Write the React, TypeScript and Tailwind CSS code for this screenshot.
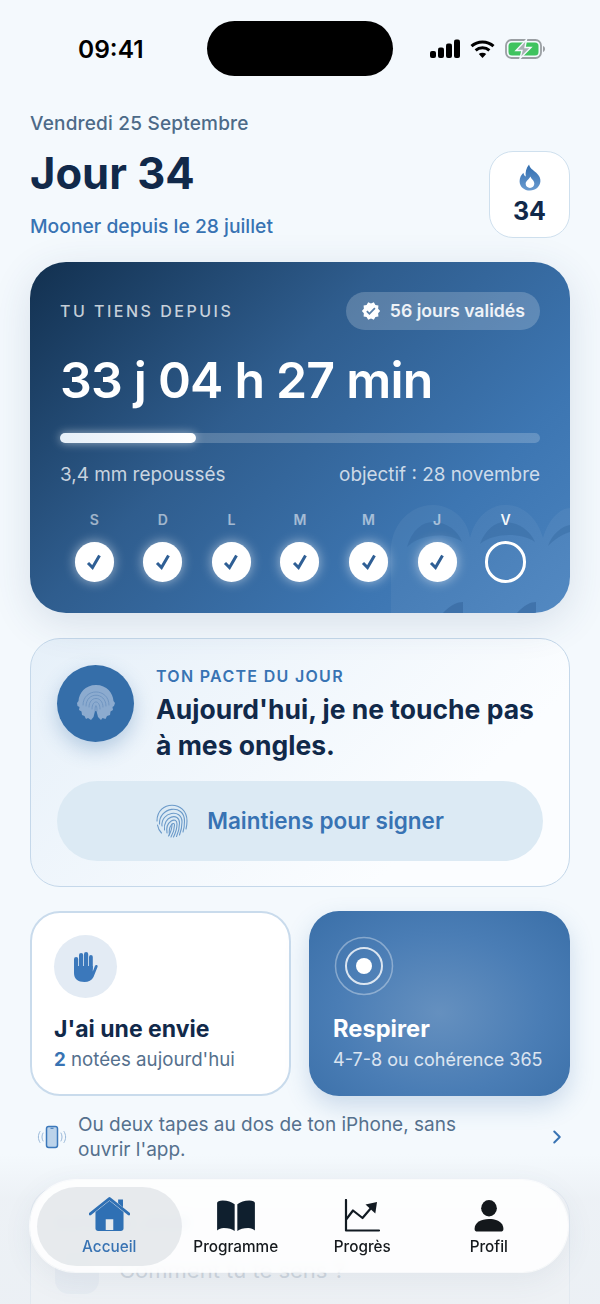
import { ChevronRight } from "lucide-react";
import { MdVerified } from "react-icons/md";

const WEEK = [
  { label: "S", done: true },
  { label: "D", done: true },
  { label: "L", done: true },
  { label: "M", done: true },
  { label: "M", done: true },
  { label: "J", done: true },
  { label: "V", done: false },
];

function StatusBar() {
  return (
    <div className="flex items-start pt-[21px] pl-[78px]">
      <span className="mt-[13px] w-[66px] text-[24.500px] leading-[30px] font-semibold text-black">09:41</span>
      <div className="ml-[63px] h-[55px] w-[186px] rounded-full bg-black" />
      <div className="ml-[37px] mt-[18px] flex items-center gap-[10px]">
        <svg width="30" height="20" viewBox="0 0 30 20" fill="#000">
          <rect x="0" y="12" width="6" height="7" rx="2" />
          <rect x="8" y="8.5" width="6" height="10.5" rx="2" />
          <rect x="16" y="4.5" width="6" height="14.5" rx="2" />
          <rect x="24" y="0.5" width="6" height="18.5" rx="2" />
        </svg>
        <svg width="25" height="20" viewBox="0 0 25 20" fill="none" stroke="#000" strokeWidth="3">
          <path d="M1.500 7.200C7.600 1.600 17.400 1.600 23.500 7.200" />
          <path d="M5.600 11.400C9.500 8 15.500 8 19.400 11.400" />
          <path d="M12.500 19L8.800 15C10.800 13.400 14.200 13.400 16.200 15Z" fill="#000" stroke="none" />
        </svg>
        <svg width="41" height="20" viewBox="0 0 41 20" fill="none">
          <rect x="1" y="1" width="35" height="18" rx="5.500" stroke="#9a9fa3" strokeWidth="1.800" />
          <rect x="3.500" y="3.500" width="30" height="13" rx="3.500" fill="#3fc35f" />
          <path d="M38 7v6c1.400-.4 2-1.600 2-3s-.6-2.600-2-3z" fill="#9a9fa3" />
          <path d="M21.500 0.500L11 11.500H17L15 19.500L26 8.500H20Z" fill="#a9b0b4" stroke="#f4f9fd" strokeWidth="1.400" />
        </svg>
      </div>
    </div>
  );
}

function Flame() {
  return (
    <svg width="24" height="27" viewBox="0 0 24 28">
      <defs>
        <linearGradient id="flameFill" x1="0" y1="0" x2="0" y2="1">
          <stop offset="0" stopColor="#2f6cae" />
          <stop offset="1" stopColor="#6a9bd0" />
        </linearGradient>
      </defs>
      <path
        d="M11 0.500C11.800 4.500 15 6 18.500 9C21.800 12 23 15 22.800 18C22.400 23.800 17.800 27.500 12 27.500C6 27.500 1.200 23.600 1.200 17.800C1.200 14 3 11 5.200 9C5.400 11 6.200 12.200 7.600 13C7 8.500 8 4 11 0.500Z"
        fill="url(#flameFill)"
      />
      <path
        d="M12.500 13C13 15.500 16.500 17 16.500 20.300C16.500 23 14.500 24.800 12 24.800C9.500 24.800 7.500 23 7.500 20.500C7.500 17.800 10.800 16.200 12.500 13Z"
        fill="#fff"
      />
    </svg>
  );
}

function SolidFingerprint() {
  return (
    <svg width="40" height="40" viewBox="0 0 40 40">
      <path
        d="M20 1C31 1 37 9 37.500 17L39 19L38 22L36.500 23L37 26L34.500 27.500L34 31L31 32L29.500 35L26.500 34L25 36L22 33L20.500 27L19 27L17.500 33L15 36L12 34L10 35L8.500 32L6 31L5.500 27.500L3 26L3.500 23L1.500 22L1 19L2.500 17C3 9 9 1 20 1Z"
        fill="#8cabcf"
      />
      <g fill="none" stroke="#6d93bf" strokeWidth="0.900" strokeLinecap="round">
        <path d="M7 21C7 3.500 33 3.500 33 21" />
        <path d="M10 22C10 7.500 30 7.500 30 22" />
        <path d="M13 23C13 11.500 27 11.500 27 23" />
        <path d="M16 25C16 15.500 24 15.500 24 25" />
        <path d="M19 27C19 19.500 21 19.500 21 27" />
      </g>
    </svg>
  );
}

function OutlineFingerprint() {
  return (
    <svg width="32" height="34" viewBox="0 0 32 34" fill="none" stroke="#6b9ac9" strokeWidth="1.100" strokeLinecap="round">
      <path d="M1 17C1 -4 31 -4 31 17C31 20 30.500 23 30 25" />
      <path d="M3.500 20C2.500 3 28.500 -1 28.500 17C28.500 21 28 25 27 28" />
      <path d="M1.500 21C2 24 3.500 27 5.500 29" />
      <path d="M6 22C4.500 8 26 4 26 18C26 23 25 27 23.500 31" />
      <path d="M8.500 26C6.500 12 23.500 8 23.500 19C23.500 24 22.500 28 20.500 32.500" />
      <path d="M11 29C9 17 21 12 21 20C21 25 19.500 29 17.500 33" />
      <path d="M13.500 31C12 21 18.500 17 18.500 21C18.500 26 17 29.500 15 33" />
      <path d="M16 20C16 25 15 28 12.500 32" />
    </svg>
  );
}

function Hand() {
  return (
    <svg width="24" height="30" viewBox="0 0 24 30" fill="#3b78bb">
      <rect x="0" y="5" width="4.200" height="15" rx="2.100" />
      <rect x="5" y="1" width="4.200" height="17" rx="2.100" />
      <rect x="10" y="0" width="4.200" height="17" rx="2.100" />
      <rect x="15" y="3" width="3.800" height="15" rx="1.900" />
      <path d="M0 14H18.800V19.500L21 13.800C21.800 12.200 24.300 13 23.500 15L19.500 25C17.800 28.200 14.500 30 10.500 30C4 30 0 27 0 21Z" />
    </svg>
  );
}

function TapPhone() {
  return (
    <svg width="30" height="24" viewBox="0 0 30 24" fill="none">
      <rect x="9.500" y="1.500" width="11" height="21" rx="2.200" fill="#bcd3ea" stroke="#3b78bb" strokeWidth="1.500" />
      <path d="M13.500 3.300h3" stroke="#3b78bb" strokeWidth="1" />
      <g stroke="#9ab9da" strokeWidth="1" strokeLinecap="round">
        <path d="M6 8C4.600 10.500 4.600 13.500 6 16" />
        <path d="M3 6.500C0.800 10 0.800 14 3 17.500" />
        <path d="M24 8C25.400 10.500 25.400 13.500 24 16" />
        <path d="M27 6.500C29.200 10 29.200 14 27 17.500" />
      </g>
    </svg>
  );
}

function HomeIcon() {
  return (
    <svg width="41" height="36" viewBox="0 0 38 37" fill="#2f70b4" preserveAspectRatio="none">
      <path d="M6 16.500L19 5L32 16.500V33.500C32 35 31 36 29.500 36H8.500C7 36 6 35 6 33.500ZM15.500 24V35H22.500V24Z" fillRule="evenodd" />
      <path d="M1 18.500L19 2.500L37 18.500" fill="none" stroke="#2f70b4" strokeWidth="2.800" strokeLinecap="round" strokeLinejoin="round" />
      <path d="M27 3.500H31.500V11.500L27 7.500Z" />
    </svg>
  );
}

function BookIcon() {
  return (
    <svg width="40" height="32" viewBox="0 0 36 33" fill="#0f1f2e" preserveAspectRatio="none">
      <path d="M1 3C1 1.500 3 0.500 6 0.500C10.500 0.500 14 1.800 16.800 4.500V32C14.500 30.300 11.500 29 7 29C4.500 29 2.500 30 1 31.500Z" />
      <path d="M35 3C35 1.500 33 0.500 30 0.500C25.500 0.500 22 1.800 19.200 4.500V32C21.500 30.300 24.500 29 29 29C31.500 29 33.500 30 35 31.500Z" />
    </svg>
  );
}

function ChartIcon() {
  return (
    <svg width="37" height="33" viewBox="0 0 36 33" fill="none" stroke="#121a22" strokeWidth="2.200" strokeLinecap="round" strokeLinejoin="round">
      <path d="M1.500 1V31.500H34.500" />
      <path d="M2 20L8.500 11.500L18 19L27 8.500" />
      <path d="M21 5.500L32.500 3L30.800 14.500Z" fill="#121a22" stroke="none" />
    </svg>
  );
}

function ProfileIcon() {
  return (
    <svg width="30" height="32" viewBox="0 0 26 31" fill="#14181c" preserveAspectRatio="none">
      <ellipse cx="13" cy="8" rx="6.800" ry="8" />
      <path d="M0.500 28C0.500 22 6 18.500 13 18.500C20 18.500 25.500 22 25.500 28C25.500 29.800 24.500 30.500 23 30.500H3C1.500 30.500 0.500 29.800 0.500 28Z" />
    </svg>
  );
}

const NAV = [
  { label: "Accueil", icon: <HomeIcon />, active: true },
  { label: "Programme", icon: <BookIcon />, active: false },
  { label: "Progrès", icon: <ChartIcon />, active: false },
  { label: "Profil", icon: <ProfileIcon />, active: false },
];

function BottomNav() {
  return (
    <div className="absolute left-[30px] top-[1180px] grid h-[92px] w-[538px] grid-cols-[repeat(4,126.5px)] rounded-[46px] bg-white/85 pl-[16px] shadow-[0_0_0_1px_rgba(255,255,255,0.7),0_8px_30px_rgba(60,90,120,0.08)] backdrop-blur-[4px]">
      {NAV.map((item) => (
        <div key={item.label} className="relative flex flex-col items-center">
          {item.active && (
            <div className="absolute -left-[9px] -right-[9px] top-[7px] h-[79px] rounded-[40px] bg-[#dfe3e7]/75" />
          )}
          <div className="relative flex h-[52px] items-end justify-center">{item.icon}</div>
          <span
            className={`relative mt-[5px] text-[15.300px] leading-[20px] font-medium ${
              item.active ? "text-[#3873b3]" : "text-[#15191d]"
            }`}
          >
            {item.label}
          </span>
        </div>
      ))}
    </div>
  );
}

export default function App() {
  return (
    <div
      className="relative h-[1304px] w-[600px] overflow-hidden bg-[#f4f9fd]"
      style={{ fontFamily: "Inter, 'Noto Sans', sans-serif" }}
    >
      <StatusBar />

      <div className="px-[30px]">
        {/* Header */}
        <div className="mt-[36px] flex items-start justify-between">
          <div>
            <p className="text-[19px] leading-[24px] font-medium tracking-[0.200px] text-[#4d6a88]">Vendredi 25 Septembre</p>
            <h1 className="mt-[10px] text-[43.500px] leading-[54px] font-bold text-[#11294a]">Jour 34</h1>
            <p className="mt-[14px] text-[19.300px] leading-[24px] font-medium text-[#3873b3]">
              Mooner depuis le 28 juillet
            </p>
          </div>
          <div className="mt-[39px] flex h-[87px] w-[81px] flex-col items-center rounded-[24px] border-[1.500px] border-[#cfe0ee] bg-white pt-[12px]">
            <Flame />
            <span className="mt-[5px] text-[25px] leading-[30px] font-bold text-[#11294a]">34</span>
          </div>
        </div>

        {/* Hero */}
        <div className="relative mt-[24px] h-[351px] overflow-hidden rounded-[36px] bg-[linear-gradient(135deg,#12304f_0%,#2f5d8e_40%,#3d76b2_75%,#4a83bf_100%)] px-[30px] pt-[30px] shadow-[0_10px_40px_rgba(40,70,110,0.14)]">
          <svg className="absolute bottom-0 right-0" width="180" height="113" viewBox="0 0 180 113" fill="none">
            <path d="M1 113V50C1 25 20 5 43 5C62 5 78 20 80 38C84 20 98 5 115 5C135 5 148 20 153 38C158 20 170 8 180 8V113Z" fill="#ffffff" fillOpacity="0.05" />
            <path d="M17 47C22 30 32 22 43 22C56 22 68 30 72 42C62 33 32 32 17 47Z" fill="#2f6098" fillOpacity="0.35" />
            <path d="M90 44C95 30 105 22 115 22C128 22 140 30 145 42C132 33 105 32 90 44Z" fill="#2f6098" fillOpacity="0.35" />
            <path d="M158 46C162 34 172 26 180 25V32C172 34 164 40 158 46Z" fill="#2f6098" fillOpacity="0.35" />
            <path d="M53 113C60 105 68 102 73 102V113Z" fill="#2f6098" fillOpacity="0.5" />
            <path d="M127 113C134 105 141 102 146 102V113Z" fill="#2f6098" fillOpacity="0.5" />
          </svg>

          <div className="relative flex items-center justify-between">
            <span className="text-[16px] leading-[38px] font-medium tracking-[2.500px] text-white/75">TU TIENS DEPUIS</span>
            <div className="flex h-[38px] items-center gap-[9px] rounded-full bg-white/20 pl-[15px] pr-[15px]">
              <MdVerified size={20} color="#fff" />
              <span className="text-[17.700px] font-semibold text-white/90">56 jours validés</span>
            </div>
          </div>

          <div className="relative mt-[18px] text-[50px] leading-[64px] font-semibold tracking-[-0.800px] text-white">33 j 04 h 27 min</div>

          <div className="relative mt-[21px] h-[10px] rounded-full bg-white/20">
            <div className="h-full w-[136px] rounded-full bg-[linear-gradient(90deg,#e6eff8,#ffffff)] shadow-[0_0_10px_rgba(255,255,255,0.55)]" />
          </div>

          <div className="relative mt-[20px] flex items-center justify-between text-[18.900px] leading-[24px] text-white/75">
            <span>3,4 mm repoussés</span>
            <span>objectif : 28 novembre</span>
          </div>

          <div className="relative mt-[23px] grid grid-cols-7">
            {WEEK.map((d, i) => (
              <div key={i} className="flex flex-col items-center">
                <span className={`text-[14px] leading-[20px] font-semibold ${d.done ? "text-white/55" : "text-white/95"}`}>
                  {d.label}
                </span>
                {d.done ? (
                  <div className="mt-[12px] flex h-[40px] w-[39px] items-center justify-center rounded-full bg-white shadow-[0_0_12px_rgba(255,255,255,0.55)]">
                    <svg width="20" height="20" viewBox="0 0 20 20" fill="none" stroke="#2f5f95" strokeWidth="3">
                      <path d="M4 11L8.500 15.500L15.500 3.500" />
                    </svg>
                  </div>
                ) : (
                  <div className="mt-[11px] h-[42px] w-[41px] rounded-full border-[3px] border-white" />
                )}
              </div>
            ))}
          </div>
        </div>

        {/* Daily pact */}
        <div className="mt-[25px] h-[249px] rounded-[30px] border border-[#c5d8ea] bg-[linear-gradient(135deg,#e6f0f9,#fbfdff_75%)] px-[26px] pt-[26px]">
          <div className="flex items-start gap-[22px]">
            <div className="flex h-[77px] w-[77px] shrink-0 items-center justify-center rounded-full bg-[#356ea9] shadow-[0_8px_20px_rgba(53,110,169,0.3)]">
              <SolidFingerprint />
            </div>
            <div className="mt-[1px]">
              <p className="text-[16px] leading-[20px] font-semibold tracking-[1.300px] text-[#3873b3]">TON PACTE DU JOUR</p>
              <p className="mt-[5px] text-[26.500px] leading-[36px] font-bold text-[#11294a]">
                Aujourd'hui, je ne touche pas
                <br />à mes ongles.
              </p>
            </div>
          </div>
          <div className="mt-[18px] flex h-[80px] items-center justify-center gap-[19px] rounded-full bg-[#dceaf4]">
            <OutlineFingerprint />
            <span className="text-[22.500px] font-semibold text-[#3873b3]">Maintiens pour signer</span>
          </div>
        </div>

        {/* Quick actions */}
        <div className="mt-[24px] grid h-[185px] grid-cols-2 gap-[18px]">
          <div className="rounded-[30px] border-2 border-[#c9dbec] bg-white pl-[22px] pt-[22px]">
            <div className="flex h-[63px] w-[63px] items-center justify-center rounded-full bg-[#e3ebf4]">
              <Hand />
            </div>
            <p className="mt-[16px] text-[23px] leading-[30px] font-bold text-[#11294a]">J'ai une envie</p>
            <p className="mt-[3px] text-[18.700px] leading-[26px] text-[#55708d]">
              <span className="font-bold text-[#3873b3]">2</span> notées aujourd'hui
            </p>
          </div>
          <div className="rounded-[30px] bg-[radial-gradient(ellipse_at_50%_55%,#6590bf_0%,#4a7db5_55%,#3a6fa8_100%)] pl-[25px] pt-[25px] shadow-[0_10px_24px_rgba(53,110,169,0.22)]">
            <svg width="60" height="60" viewBox="0 0 60 60" fill="none">
              <circle cx="30" cy="30" r="28.500" stroke="#fff" strokeOpacity="0.35" strokeWidth="1.500" />
              <circle cx="30" cy="30" r="18" stroke="#fff" strokeOpacity="0.8" strokeWidth="2" />
              <circle cx="30" cy="30" r="8" fill="#fff" />
            </svg>
            <p className="-ml-[1px] mt-[18px] text-[23.700px] leading-[30px] font-bold text-white">Respirer</p>
            <p className="-ml-[1px] mt-[3px] text-[18px] leading-[26px] text-white/80">4-7-8 ou cohérence 365</p>
          </div>
        </div>

        {/* Back tap hint */}
        <div className="mt-[16px] flex items-center pl-[7px] pr-[2px]">
          <TapPhone />
          <p className="ml-[11px] w-[420px] text-[19px] leading-[25px] text-[#55708d]">
            Ou deux tapes au dos de ton iPhone, sans ouvrir l'app.
          </p>
          <ChevronRight className="ml-auto" size={22} strokeWidth={2.200} color="#3873b3" />
        </div>

        {/* Check-in card, mostly under the tab bar */}
        <div className="mt-[24px] h-[200px] rounded-[30px] border border-[#d5e2ee] bg-white/60 px-[24px] pt-[26px]">
          <p className="text-[16px] leading-[20px] font-semibold tracking-[1.300px] text-[#3873b3] blur-[1px]">SUIVI DU JOUR</p>
          <div className="mt-[13px] flex items-center gap-[20px]">
            <div className="h-[48px] w-[44px] rounded-[14px] bg-[#e3ebf4]" />
            <p className="text-[22px] leading-[30px] text-[#97a5b3]">Comment tu te sens ?</p>
          </div>
        </div>
      </div>

      {/* Fade behind the tab bar */}
      <div className="absolute inset-x-0 bottom-0 h-[150px] bg-[linear-gradient(180deg,rgba(232,236,241,0)_0%,rgba(232,236,241,0.6)_30%,rgba(232,236,241,0.7)_100%)]" />
      <BottomNav />
    </div>
  );
}
